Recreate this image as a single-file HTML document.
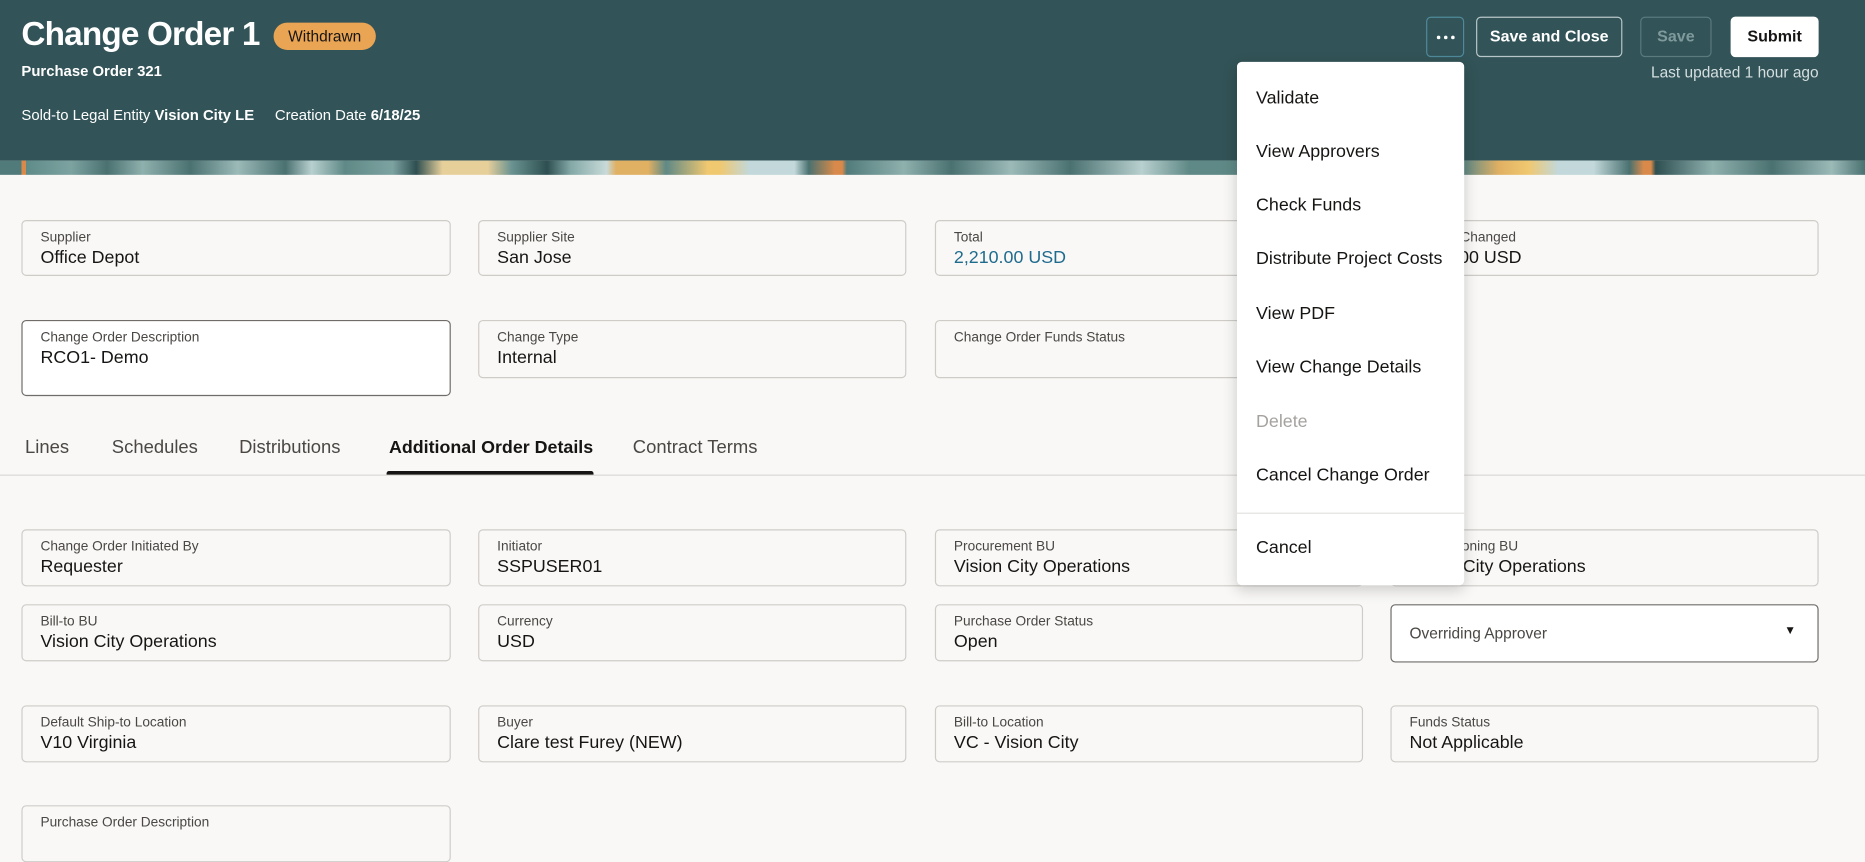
<!DOCTYPE html>
<html><head><meta charset="utf-8"><style>
html,body{margin:0;padding:0;width:1865px;height:833px;overflow:hidden;background:#f9f8f6}
#w{position:absolute;left:0;top:0;width:1568px;height:700px;transform:scale(1.18942);transform-origin:0 0;font-family:"Liberation Sans",sans-serif;color:#161513}
.a{position:absolute;white-space:nowrap}
#hd{position:absolute;left:0;top:0;width:1568px;height:135px;background:#325357}
#st{position:absolute;left:0;top:135px;width:1568px;height:12px;background:
linear-gradient(90deg,#517b7b 0,#517b7b 18px,#d98a4a 18px,#d98a4a 22px,#5e8b88 22px,#7da3a1 60px,#4a7170 90px,#8fb1ae 120px,#4a7170 160px,#9bbab8 200px,#4a7170 240px,#b8d0cf 262px,#5f8986 290px,#7da3a1 330px,#2e4f51 350px,#e7cf9a 372px,#e7cf9a 410px,#6a9391 430px,#2e4f51 460px,#84a9a7 480px,#c8dad9 510px,#e0b063 518px,#e0b063 545px,#5f8986 560px,#f0c870 595px,#f0c870 605px,#c2d8da 630px,#c2d8da 668px,#4a7170 680px,#d98a4a 702px,#d98a4a 708px,#517b7b 712px,#8fb1ae 760px,#4a7170 800px,#9bbab8 850px,#4a7170 900px,#b8d0cf 960px,#5f8986 1000px,#5f8986 1231px,#e0b063 1260px,#f0c870 1285px,#c2d8da 1310px,#c2d8da 1340px,#4a7170 1370px,#d98a4a 1382px,#d98a4a 1388px,#2e4f51 1392px,#8fb1ae 1440px,#4a7170 1490px,#9bbab8 1540px,#4a7170 1568px)}
.f{position:absolute;height:47px;border:1px solid #cfccc8;border-radius:4px;background:#f9f8f6;box-sizing:border-box}
.f .l{position:absolute;left:15px;top:8px;font-size:11.5px;color:#4a4744;white-space:nowrap}
.f .v{position:absolute;left:15px;top:22px;font-size:15px;color:#161513;white-space:nowrap}
.btn{position:absolute;top:14px;height:34px;border:1px solid #b7c7c9;border-radius:4px;box-sizing:border-box;color:#fff;font-weight:bold;font-size:13.5px;text-align:center;line-height:32px}
#menu{position:absolute;left:1040px;top:52px;width:191px;height:440px;background:#fff;border-radius:4px;box-shadow:0 4px 12px rgba(0,0,0,.18)}
#menu div{position:absolute;left:16px;font-size:15px;color:#161513;white-space:nowrap}
.tab{position:absolute;top:368px;font-size:15.5px;color:#4a4744}
.dot{position:absolute;top:15px;width:3px;height:3px;border-radius:50%;background:#fff}
</style></head><body><div id="w">
<div id="hd"></div><div id="st"></div>
<div class="a" style="left:18px;top:13px;font-size:28px;font-weight:bold;color:#fff;letter-spacing:-0.7px">Change Order 1</div>
<div class="a" style="left:230px;top:19px;width:86px;height:23px;border-radius:12px;background:#e9a454;font-size:13px;text-align:center;line-height:23px;color:#161513">Withdrawn</div>
<div class="a" style="left:18px;top:53px;font-size:12.5px;font-weight:bold;color:#fff">Purchase Order 321</div>
<div class="a" style="left:18px;top:90px;font-size:12.5px;color:#fff">Sold-to Legal Entity <b>Vision City LE</b>&nbsp;&nbsp;&nbsp;&nbsp;&nbsp;Creation Date <b>6/18/25</b></div>
<div class="btn" style="left:1199px;width:32px;border-color:#4f8a9a"><span class="dot" style="left:8px"></span><span class="dot" style="left:14px"></span><span class="dot" style="left:20px"></span></div>
<div class="btn" style="left:1241px;width:123px">Save and Close</div>
<div class="btn" style="left:1379px;width:60px;border-color:#5a7a7d;color:#7f9a9c">Save</div>
<div class="btn" style="left:1455px;width:74px;background:#fff;border-color:#fff;color:#161513">Submit</div>
<div class="a" style="right:39px;top:53px;font-size:13px;color:#d5dfe0">Last updated 1 hour ago</div>

<div class="f" style="left:18px;top:185px;width:361px"><div class="l">Supplier</div><div class="v">Office Depot</div></div>
<div class="f" style="left:402px;top:185px;width:360px"><div class="l">Supplier Site</div><div class="v">San Jose</div></div>
<div class="f" style="left:786px;top:185px;width:360px"><div class="l">Total</div><div class="v" style="color:#1f6b8e">2,210.00 USD</div></div>
<div class="f" style="left:1169px;top:185px;width:360px"><div class="l">Amount Changed</div><div class="v">1,010.00 USD</div></div>
<div class="f" style="left:18px;top:269px;width:361px;height:64px;background:#fff;border-color:#6f6c69"><div class="l">Change Order Description</div><div class="v">RCO1- Demo</div></div>
<div class="f" style="left:402px;top:269px;width:360px;height:49px"><div class="l">Change Type</div><div class="v">Internal</div></div>
<div class="f" style="left:786px;top:269px;width:360px;height:49px"><div class="l">Change Order Funds Status</div></div>

<div class="tab" style="left:21px">Lines</div>
<div class="tab" style="left:94px">Schedules</div>
<div class="tab" style="left:201px">Distributions</div>
<div class="tab" style="left:327px;color:#161513;font-weight:bold;font-size:15px">Additional Order Details</div>
<div class="tab" style="left:532px">Contract Terms</div>
<div class="a" style="left:0;top:399px;width:1568px;height:1px;background:#dcd9d5"></div>
<div class="a" style="left:325px;top:396px;width:174px;height:3px;background:#161513;border-radius:2px 2px 0 0"></div>

<div class="f" style="left:18px;top:445px;width:361px;height:48px"><div class="l">Change Order Initiated By</div><div class="v">Requester</div></div>
<div class="f" style="left:402px;top:445px;width:360px;height:48px"><div class="l">Initiator</div><div class="v">SSPUSER01</div></div>
<div class="f" style="left:786px;top:445px;width:360px;height:48px"><div class="l">Procurement BU</div><div class="v">Vision City Operations</div></div>
<div class="f" style="left:1169px;top:445px;width:360px;height:48px"><div class="l">Requisitioning BU</div><div class="v">Vision City Operations</div></div>

<div class="f" style="left:18px;top:508px;width:361px;height:48px"><div class="l">Bill-to BU</div><div class="v">Vision City Operations</div></div>
<div class="f" style="left:402px;top:508px;width:360px;height:48px"><div class="l">Currency</div><div class="v">USD</div></div>
<div class="f" style="left:786px;top:508px;width:360px;height:48px"><div class="l">Purchase Order Status</div><div class="v">Open</div></div>
<div class="f" style="left:1169px;top:508px;width:360px;height:49px;background:#fff;border-color:#6f6c69"><div class="l" style="top:16px;font-size:13px">Overriding Approver</div><div class="a" style="right:18px;top:16px;font-size:10px">&#9660;</div></div>

<div class="f" style="left:18px;top:593px;width:361px;height:48px"><div class="l">Default Ship-to Location</div><div class="v">V10 Virginia</div></div>
<div class="f" style="left:402px;top:593px;width:360px;height:48px"><div class="l">Buyer</div><div class="v">Clare test Furey (NEW)</div></div>
<div class="f" style="left:786px;top:593px;width:360px;height:48px"><div class="l">Bill-to Location</div><div class="v">VC - Vision City</div></div>
<div class="f" style="left:1169px;top:593px;width:360px;height:48px"><div class="l">Funds Status</div><div class="v">Not Applicable</div></div>

<div class="f" style="left:18px;top:677px;width:361px;height:48px"><div class="l">Purchase Order Description</div></div>

<div id="menu">
<div style="top:22px">Validate</div>
<div style="top:67px">View Approvers</div>
<div style="top:112px">Check Funds</div>
<div style="top:157px">Distribute Project Costs</div>
<div style="top:203px">View PDF</div>
<div style="top:248px">View Change Details</div>
<div style="top:294px;color:#a5a29f">Delete</div>
<div style="top:339px">Cancel Change Order</div>
<div style="top:379px;left:0;width:191px;height:1px;background:#e4e2df"></div>
<div style="top:400px">Cancel</div>
</div>
</div></body></html>
